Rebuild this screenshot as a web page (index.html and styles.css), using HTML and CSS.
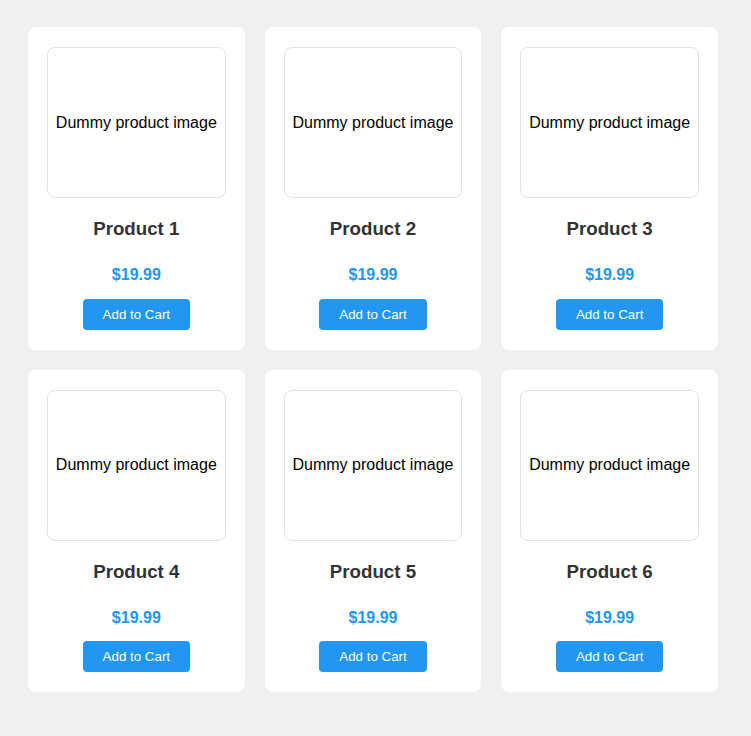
FILE: index.html
```html
<!DOCTYPE html>
<html>
<head>
<meta charset="utf-8">
<link rel="stylesheet" href="styles.css">
</head>
<body>
<div class="grid">
  <div class="card">
    <div class="image">Dummy product image</div>
    <h3 class="title">Product 1</h3>
    <p class="price">$19.99</p>
    <button class="btn">Add to Cart</button>
  </div>
  <div class="card">
    <div class="image">Dummy product image</div>
    <h3 class="title">Product 2</h3>
    <p class="price">$19.99</p>
    <button class="btn">Add to Cart</button>
  </div>
  <div class="card">
    <div class="image">Dummy product image</div>
    <h3 class="title">Product 3</h3>
    <p class="price">$19.99</p>
    <button class="btn">Add to Cart</button>
  </div>
  <div class="card">
    <div class="image">Dummy product image</div>
    <h3 class="title">Product 4</h3>
    <p class="price">$19.99</p>
    <button class="btn">Add to Cart</button>
  </div>
  <div class="card">
    <div class="image">Dummy product image</div>
    <h3 class="title">Product 5</h3>
    <p class="price">$19.99</p>
    <button class="btn">Add to Cart</button>
  </div>
  <div class="card">
    <div class="image">Dummy product image</div>
    <h3 class="title">Product 6</h3>
    <p class="price">$19.99</p>
    <button class="btn">Add to Cart</button>
  </div>
</div>
</body>
</html>
```
FILE: styles.css
```css
html, body {
  margin: 0;
  padding: 0;
  background: #f0f0f0;
  font-family: "Liberation Sans", Arial, sans-serif;
}
.grid {
  display: grid;
  grid-template-columns: repeat(3, 216.67px);
  gap: 20px;
  padding: 27px 0 0 28px;
}
.card {
  background: #fff;
  border-radius: 8px;
  padding: 20px 19px;
  display: flex;
  flex-direction: column;
  align-items: center;
  text-align: center;
}
.image {
  box-sizing: border-box;
  width: 100%;
  height: 151px;
  border: 1px solid #e3e3e3;
  border-radius: 8px;
  display: flex;
  align-items: center;
  justify-content: center;
  font-size: 16px;
  color: #000;
}
.title {
  margin: 20px 0 0;
  font-size: 18.72px;
  font-weight: bold;
  color: #333;
}
.price {
  margin: 26px 0 0;
  font-size: 16px;
  font-weight: bold;
  color: #2196f3;
}
.btn {
  margin-top: 14.5px;
  background: #2196f3;
  color: #fff;
  border: none;
  border-radius: 4px;
  padding: 8px 20px;
  font-family: "Liberation Sans", Arial, sans-serif;
  font-size: 13.33px;
  line-height: 15px;
}
```
